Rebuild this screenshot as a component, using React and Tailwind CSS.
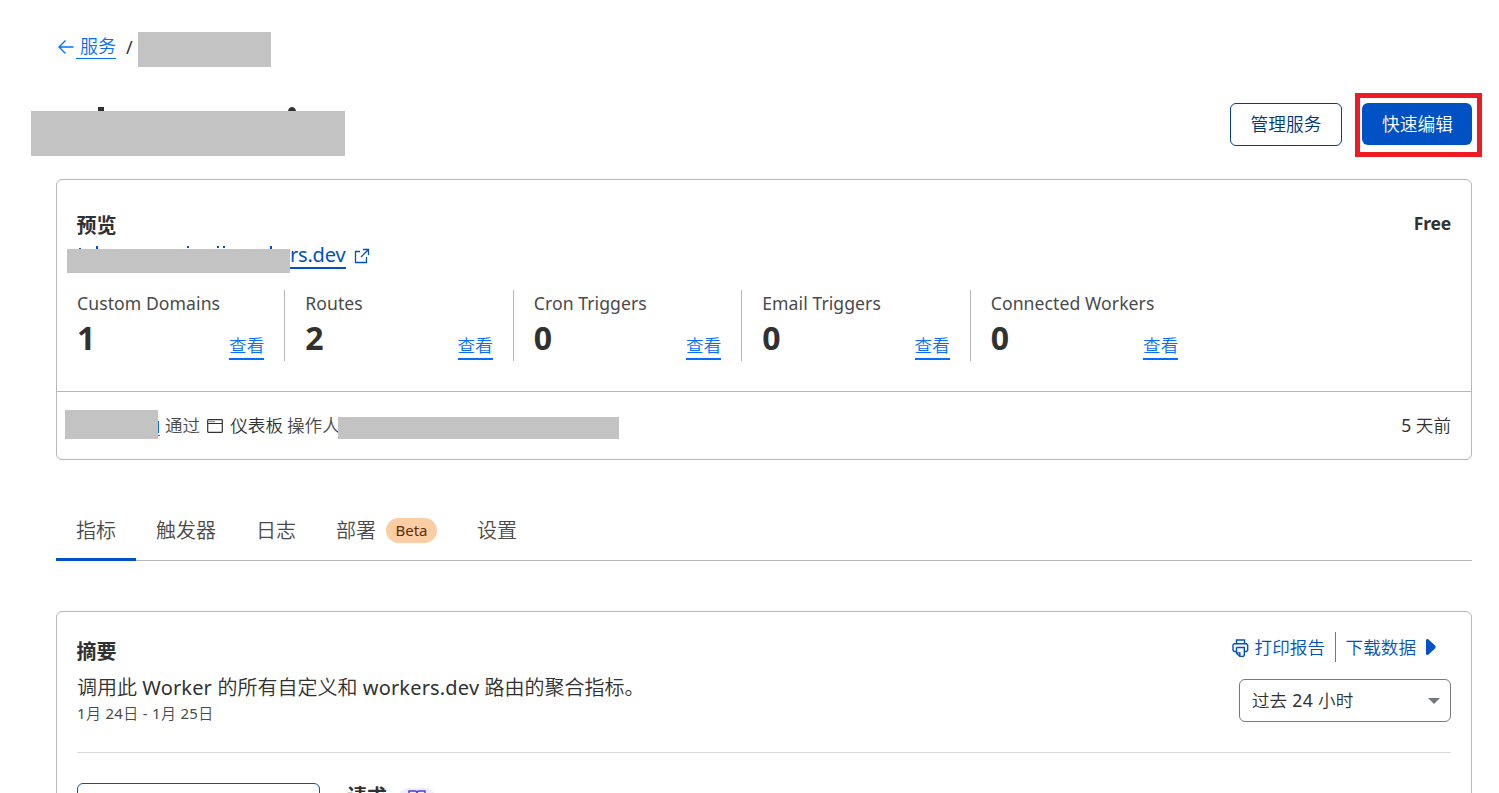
const VIEW = '查看';

function Redacted({ className }) {
  return <div className={`bg-[#c3c3c3] ${className}`} />;
}

function ArrowLeft() {
  return (
    <svg className="block h-[16px] w-[17px]" viewBox="0 0 17 16" fill="none" stroke="#056dff" strokeWidth="1.3">
      <path d="M16.5 8H1.8M8.500 1.500L2 8L8.500 14.500" />
    </svg>
  );
}

function ExternalIcon() {
  return (
    <svg className="block h-[16px] w-[16px]" viewBox="0 0 16 16" fill="none" stroke="#0051c3" strokeWidth="1.3">
      <path d="M6 3.500H1.500V14.500H12.500V9M9 1.500H14.500V7M14.500 1.500L7 9" />
    </svg>
  );
}

function WindowIcon() {
  return (
    <svg className="block h-[14px] w-[16px]" viewBox="0 0 16 14" fill="none" stroke="#313131" strokeWidth="1.2">
      <rect x="0.700" y="0.700" width="14.600" height="12.600" rx="0.800" />
      <path d="M1 4.5H15M2.500 2.600H3.500M4.500 2.600H5.500M6.500 2.600H7.500" />
    </svg>
  );
}

function PrinterIcon() {
  return (
    <svg className="block h-[19px] w-[17px]" viewBox="0 0 17 19" fill="none" stroke="#0051c3" strokeWidth="1.4">
      <path d="M4.500 4.800V1H12.5V4.800M4.2 12.500H2.200L1 11.300V6L2.200 4.800H14.500L15.700 6V11.300L14.500 12.500H12.5M4.5 8.500H12.3V16.200L11.300 17.400H7.8L4.5 14.2V8.500M7.900 17V13.900H4.800" />
    </svg>
  );
}

function BookIcon() {
  return (
    <svg className="block h-[14px] w-[18px]" viewBox="0 0 18 14" fill="none" stroke="#4d3bd6" strokeWidth="1.4">
      <path d="M9 2.500L7.800 1H1V12H7L9 13.500L11 12H17V1H10.200L9 2.500V13" />
    </svg>
  );
}

const stats = [
  { label: 'Custom Domains', value: 1 },
  { label: 'Routes', value: 2 },
  { label: 'Cron Triggers', value: 0 },
  { label: 'Email Triggers', value: 0 },
  { label: 'Connected Workers', value: 0 },
];

function Stat({ label, value, first }) {
  return (
    <div className={`flex h-[71px] flex-col pr-[20px] ${first ? 'w-[207.25px]' : 'w-[228.5px] border-l border-[#b6b7b8] pl-[20px]'}`}>
      <div className="mt-[1px] h-[25px] whitespace-nowrap text-[17.6px] font-normal leading-[25px] tracking-[0.07px] text-[#4a4a4a]">{label}</div>
      <div className="flex h-[45px] justify-between">
        <span className="text-[32px] font-bold leading-[44px] text-[#313131]">{value}</span>
        <a className="mt-[19px] h-[25px] border-b-2 border-[#056dff] text-[17.6px] leading-[21px] text-[#056dff]">{VIEW}</a>
      </div>
    </div>
  );
}

function Tab({ children, active }) {
  return (
    <div className={`flex h-[61px] items-center px-[20px] text-[20px] leading-[28px] ${active ? 'border-b-[3px] border-[#0051c3] pt-[3px]' : ''}`}>
      {children}
    </div>
  );
}

export default function App() {
  return (
    <div className="flex h-[793px] w-[1499px] flex-col overflow-hidden bg-white font-[350] text-[#313131] [font-family:'Noto_Sans','Noto_Sans_CJK_SC',sans-serif]">
      <nav className="mt-[32px] flex h-[35px] shrink-0 pl-[57px]">
        <div className="mt-[7px]"><ArrowLeft /></div>
        <a className="ml-[2px] mt-[4px] h-[23px] border-b border-[#056dff] pl-[4px] text-[18px] leading-[21px] text-[#056dff]">服务</a>
        <span className="ml-[10px] mt-[3px] w-[12px] text-[18px] font-normal leading-[24px]">/</span>
        <Redacted className="h-[35px] w-[133px]" />
      </nav>

      <header className="mt-[26px] flex h-[64px] shrink-0 justify-between pl-[31px] pr-[17px]">
        <div className="flex flex-col">
          <svg className="ml-[67px] mt-[14px] block h-[4px] w-[200px]" viewBox="0 0 200 4" fill="#313131">
            <rect x="0" y="0" width="6" height="4" />
            <path d="M190 4C190.500 1 192.300 0 194 0C195.700 0 197.500 1 198 4Z" />
          </svg>
          <Redacted className="h-[45px] w-[314px]" />
        </div>
        <div className="flex">
          <button className="mr-[13px] mt-[10px] h-[43px] w-[112px] rounded-[6px] border border-[#003d9e] pb-[2px] text-[17.7px] leading-[24px] text-[#003681]">管理服务</button>
          <div className="h-[64px] w-[127px] border-[5px] border-[#ed1c24] pl-[2px] pt-[5px]">
            <button className="block h-[42px] w-[110px] rounded-[6px] bg-[#0051c3] pl-[1px] text-[17.7px] leading-[24px] text-white">快速编辑</button>
          </div>
        </div>
      </header>

      <section className="ml-[56px] mt-[22px] flex h-[281px] w-[1416px] shrink-0 flex-col rounded-[6px] border border-[#b6b7b8]">
        <div className="flex h-[66px] shrink-0 justify-between px-[20px]">
          <h2 className="-ml-[0.5px] mt-[32px] text-[20px] font-bold leading-[28px]">预览</h2>
          <span className="mt-[31px] text-[17.5px] font-bold leading-[25px] tracking-[-0.2px]">Free</span>
        </div>
        <div className="flex h-[44px] shrink-0 pl-[10px]">
          <div className="w-[223px]">
            <svg className="block h-[3px] w-[223px]" viewBox="0 0 223 3" fill="#0051c3">
              <path d="M12 2H14V3H12ZM29 0H31V3H29ZM120 0H122V2H120ZM150 0H152V2H150ZM156 0H158V2H156ZM203 0H205V3H203Z" />
            </svg>
            <Redacted className="h-[24px] w-[223px]" />
          </div>
          <a className="-mt-[4px] h-[27px] w-[56px] whitespace-nowrap border-b-2 border-[#0051c3] text-[20px] font-normal leading-[26px] tracking-[-0.2px] text-[#0051c3]">rs.dev</a>
          <div className="ml-[8px] mt-[2px]"><ExternalIcon /></div>
        </div>
        <div className="flex h-[101px] shrink-0 pl-[20px]">
          {stats.map((s, i) => (
            <Stat key={s.label} {...s} first={i === 0} />
          ))}
        </div>
        <div className="flex flex-1 justify-between border-t border-[#b6b7b8] pl-[8px] pr-[20px] text-[17.6px] leading-[26px]">
          <div className="flex">
            <Redacted className="mt-[18px] h-[29px] w-[93px]" />
            <svg className="mt-[28px] block h-[17px] w-[2px]" viewBox="0 0 2 17" fill="#056dff">
              <path d="M0 1H1V13H0ZM0 15H2V16H0Z" />
            </svg>
            <span className="ml-[5px] mt-[20px] text-[#4a4a4a]">通过</span>
            <div className="ml-[7px] mt-[27px]"><WindowIcon /></div>
            <span className="ml-[7px] mt-[20px]">仪表板</span>
            <span className="ml-[4px] mt-[20px] w-[51px] whitespace-nowrap text-[#4a4a4a]">操作人</span>
            <Redacted className="relative mt-[25px] h-[22px] w-[281px]" />
          </div>
          <span className="mt-[20px] whitespace-nowrap"><span className="font-normal">5 </span>天前</span>
        </div>
      </section>

      <div className="ml-[56px] mt-[40px] flex h-[61px] w-[1416px] shrink-0 border-b border-[#b6b7b8] text-[#4a4a4a]">
        <Tab active>指标</Tab>
        <Tab>触发器</Tab>
        <Tab>日志</Tab>
        <Tab>
          部署
          <span className="ml-[10px] h-[25px] w-[51px] rounded-full bg-[#fbcda5] text-center text-[15px] font-normal leading-[25px] text-[#5c2c04]">Beta</span>
        </Tab>
        <Tab>设置</Tab>
      </div>

      <section className="ml-[56px] mt-[50px] flex h-[220px] w-[1416px] shrink-0 flex-col rounded-[6px] border border-[#b6b7b8] px-[20px]">
        <div className="flex h-[141px] shrink-0 justify-between border-b border-[#d9d9d9]">
          <div className="flex flex-col whitespace-nowrap">
            <h2 className="-ml-[0.5px] mt-[26px] text-[20px] font-bold leading-[28px]">摘要</h2>
            <p className="mt-[8px] text-[20px] leading-[28px]">
              调用此<span className="font-normal tracking-[0.15px]"> Worker </span>的所有自定义和<span className="font-normal tracking-[0.17px]"> workers.dev </span>路由的聚合指标。
            </p>
            <p className="text-[15px] leading-[22px] tracking-[0.3px] text-[#4a4a4a]">
              <span className="font-normal">1</span>月<span className="font-normal"> 24</span>日<span className="font-normal"> - 1</span>月<span className="font-normal"> 25</span>日
            </p>
          </div>
          <div className="flex flex-col items-end">
            <div className="mt-[20px] flex h-[30px] pr-[15px] text-[17.6px] leading-[30px] text-[#0051c3]">
              <div className="mt-[7px]"><PrinterIcon /></div>
              <span className="ml-[6px] w-[80px]">打印报告</span>
              <span className="border-l border-[#797979] pl-[10px]">下载数据</span>
              <svg className="ml-[10px] mt-[7px] block h-[16px] w-[10px]" viewBox="0 0 10 16" fill="#0051c3"><path d="M0 0.500L2 0L9.500 7L9.500 9L2 16L0 15.500Z" /></svg>
            </div>
            <div className="mt-[17px] flex h-[43px] w-[212px] items-center justify-between rounded-[6px] border border-[#797979] pl-[12px] pr-[10px] text-[17.6px]">
              <span>过去<span className="font-normal tracking-[0.4px]"> 24 </span>小时</span>
              <svg className="block h-[6px] w-[12px]" viewBox="0 0 12 6" fill="#72777d"><path d="M0 0H12L6 6Z" /></svg>
            </div>
          </div>
        </div>
        <div className="flex pt-[30px]">
          <div className="h-[60px] w-[243px] shrink-0 rounded-[6px] border border-[#0051c3]" />
          <h3 className="ml-[27px] text-[20px] font-bold leading-[28px]">请求</h3>
          <div className="ml-[10px] mt-[5px] flex h-[25px] w-[40px] justify-center rounded-full bg-[#f0eefc] pt-[2px]"><BookIcon /></div>
        </div>
      </section>
    </div>
  );
}
